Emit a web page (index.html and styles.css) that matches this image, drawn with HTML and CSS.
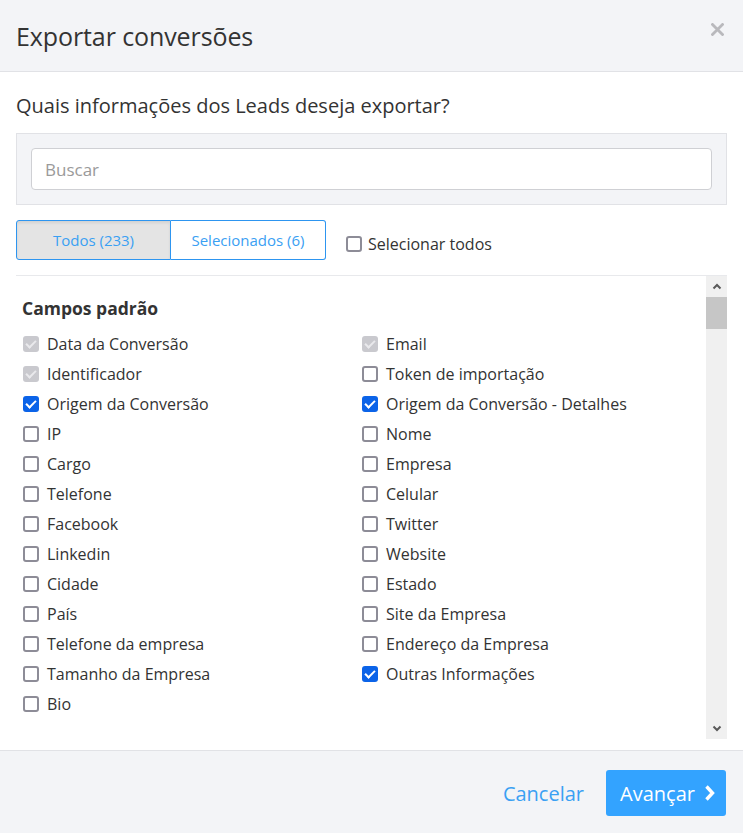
FILE: index.html
```html
<!DOCTYPE html>
<html lang="pt">
<head>
<meta charset="utf-8">
<title>Exportar conversões</title>
<link rel="stylesheet" href="styles.css">
</head>
<body>
<div class="modal">
  <header class="modal-header">
    <h1 class="modal-title">Exportar conversões</h1>
    <button class="close" aria-label="Fechar">
      <svg width="13" height="13" viewBox="0 0 13 13"><path d="M1.5 1.5 L11.5 11.5 M11.5 1.5 L1.5 11.5" stroke="#b9b9bd" stroke-width="2.8" stroke-linecap="square"/></svg>
    </button>
  </header>
  <section class="modal-body">
    <p class="question">Quais informações dos Leads deseja exportar?</p>
    <div class="search-panel">
      <input class="search-input" type="text" placeholder="Buscar">
    </div>
    <div class="toolbar">
      <div class="tabs">
        <button class="tab active">Todos (233)</button>
        <button class="tab">Selecionados (6)</button>
      </div>
      <label class="select-all"><span class="cb"></span>Selecionar todos</label>
    </div>
    <div class="list-wrap">
      <div class="list">
        <h2 class="group-title">Campos padrão</h2>
        <div class="fields">
          <label class="field"><span class="cb disabled"></span>Data da Conversão</label>
          <label class="field"><span class="cb disabled"></span>Email</label>
          <label class="field"><span class="cb disabled"></span>Identificador</label>
          <label class="field"><span class="cb"></span>Token de importação</label>
          <label class="field"><span class="cb checked"></span>Origem da Conversão</label>
          <label class="field"><span class="cb checked"></span>Origem da Conversão - Detalhes</label>
          <label class="field"><span class="cb"></span>IP</label>
          <label class="field"><span class="cb"></span>Nome</label>
          <label class="field"><span class="cb"></span>Cargo</label>
          <label class="field"><span class="cb"></span>Empresa</label>
          <label class="field"><span class="cb"></span>Telefone</label>
          <label class="field"><span class="cb"></span>Celular</label>
          <label class="field"><span class="cb"></span>Facebook</label>
          <label class="field"><span class="cb"></span>Twitter</label>
          <label class="field"><span class="cb"></span>Linkedin</label>
          <label class="field"><span class="cb"></span>Website</label>
          <label class="field"><span class="cb"></span>Cidade</label>
          <label class="field"><span class="cb"></span>Estado</label>
          <label class="field"><span class="cb"></span>País</label>
          <label class="field"><span class="cb"></span>Site da Empresa</label>
          <label class="field"><span class="cb"></span>Telefone da empresa</label>
          <label class="field"><span class="cb"></span>Endereço da Empresa</label>
          <label class="field"><span class="cb"></span>Tamanho da Empresa</label>
          <label class="field"><span class="cb checked"></span>Outras Informações</label>
          <label class="field"><span class="cb"></span>Bio</label>
        </div>
      </div>
      <div class="scrollbar">
        <div class="sb-btn">
          <svg width="10" height="7" viewBox="0 0 10 7"><path d="M1.5 5.5 L5 2 L8.5 5.5" fill="none" stroke="#5a5a5a" stroke-width="2"/></svg>
        </div>
        <div class="sb-track"><div class="sb-thumb"></div></div>
        <div class="sb-btn">
          <svg width="10" height="7" viewBox="0 0 10 7"><path d="M1.5 1.5 L5 5 L8.5 1.5" fill="none" stroke="#5a5a5a" stroke-width="2"/></svg>
        </div>
      </div>
    </div>
  </section>
  <footer class="modal-footer">
    <button class="btn-link">Cancelar</button>
    <button class="btn-primary">Avançar
      <svg width="12" height="18" viewBox="0 0 12 18"><path d="M2.5 2.5 L8.5 9 L2.5 15.5" fill="none" stroke="#fff" stroke-width="3.4"/></svg>
    </button>
  </footer>
</div>
</body>
</html>
```

FILE: styles.css
```css
* { box-sizing: border-box; }
html, body { margin: 0; padding: 0; }
body {
  font-family: "Open Sans", "Noto Sans", sans-serif;
  color: #333;
  background: #fff;
  width: 743px;
  height: 833px;
  overflow: hidden;
}
.modal { display: flex; flex-direction: column; height: 833px; }

.modal-header {
  height: 72px;
  background: #f3f4f7;
  border-bottom: 1px solid #e1e2e6;
  display: flex;
  align-items: center;
  justify-content: space-between;
  padding: 0 19px 0 16px;
}
.modal-title {
  margin: 0;
  font-size: 25px;
  font-weight: 400;
  color: #333;
  line-height: 30px;
  letter-spacing: -0.1px;
}
.close {
  border: 0;
  background: none;
  padding: 0;
  width: 13px;
  height: 13px;
  margin-bottom: 12px;
  display: flex;
}

.modal-body {
  padding: 20px 16px 11px 16px;
  flex: none;
}
.question {
  margin: 0 0 14px 0;
  font-size: 20px;
  line-height: 27px;
  color: #333;
}
.search-panel {
  background: #f3f4f7;
  border: 1px solid #e1e2e6;
  padding: 14px;
}
.search-input {
  display: block;
  width: 100%;
  height: 42px;
  border: 1px solid #cfd0d4;
  border-radius: 4px;
  background: #fff;
  font-family: inherit;
  font-size: 17px;
  padding: 0 13px;
  color: #333;
}
.search-input::placeholder { color: #9a9a9a; }

.toolbar {
  display: flex;
  align-items: center;
  margin-top: 15px;
  padding-bottom: 15px;
  border-bottom: 1px solid #e8e9ec;
}
.tabs { display: flex; }
.tab {
  width: 155px;
  height: 40px;
  border: 1px solid #2d95f0;
  background: #fff;
  color: #3aa0f3;
  font-family: inherit;
  font-size: 15px;
  padding: 0;
}
.tab + .tab { border-left: 0; }
.tab.active { background: #e4e4e4; box-shadow: inset 0 2px 3px rgba(0,0,0,0.08); }
.tab:first-child { border-radius: 3px 0 0 3px; }
.tab:last-child { border-radius: 0 3px 3px 0; }

.select-all {
  display: flex;
  align-items: center;
  margin-left: 20px;
  margin-top: 7px;
  font-size: 16px;
  color: #333;
  gap: 6px;
}

.cb {
  width: 16px;
  height: 16px;
  flex: none;
  border: 2px solid #8d8c97;
  border-radius: 3px;
  background: #fff;
  position: relative;
}
.cb.checked, .cb.disabled { border: 0; }
.cb.checked { background: #0b63e8; }
.cb.disabled { background: #c9c9ce; }
.cb.checked::after, .cb.disabled::after {
  content: "";
  position: absolute;
  left: 5px;
  top: 2px;
  width: 4px;
  height: 8px;
  border-right: 2px solid #fff;
  border-bottom: 2px solid #fff;
  transform: rotate(45deg);
}
.cb.disabled::after { border-color: #e9e9ec; }

.list-wrap {
  display: flex;
  height: 463px;
}
.list {
  flex: 1;
  padding: 20px 0 0 6px;
  overflow: hidden;
}
.group-title {
  margin: 0 0 9px 0;
  font-size: 17.5px;
  font-weight: 700;
  line-height: 24px;
  color: #333;
}
.fields {
  display: grid;
  grid-template-columns: 339px 1fr;
}
.field {
  display: flex;
  align-items: center;
  gap: 8px;
  height: 30px;
  font-size: 16px;
  color: #333;
  padding-left: 1px;
}

.scrollbar {
  width: 21px;
  background: #f0f0f0;
  display: flex;
  flex-direction: column;
}
.sb-btn {
  height: 21px;
  display: flex;
  align-items: center;
  justify-content: center;
}
.sb-track { flex: 1; }
.sb-thumb { height: 32px; background: #c6c6c6; }

.modal-footer {
  flex: 1;
  background: #f3f4f7;
  border-top: 1px solid #e1e2e6;
  display: flex;
  justify-content: flex-end;
  align-items: flex-start;
  padding: 19px 17px 0 0;
  gap: 22px;
}
.btn-link {
  border: 0;
  background: none;
  font-family: inherit;
  font-size: 20px;
  color: #3aa0f3;
  height: 46px;
  padding: 0;
}
.btn-primary {
  width: 120px;
  height: 46px;
  border: 0;
  border-radius: 3px;
  background: #33a3ff;
  color: #fff;
  font-family: inherit;
  font-size: 20px;
  display: flex;
  align-items: center;
  justify-content: center;
  gap: 9px;
  padding: 0 0 0 4px;
}
```
